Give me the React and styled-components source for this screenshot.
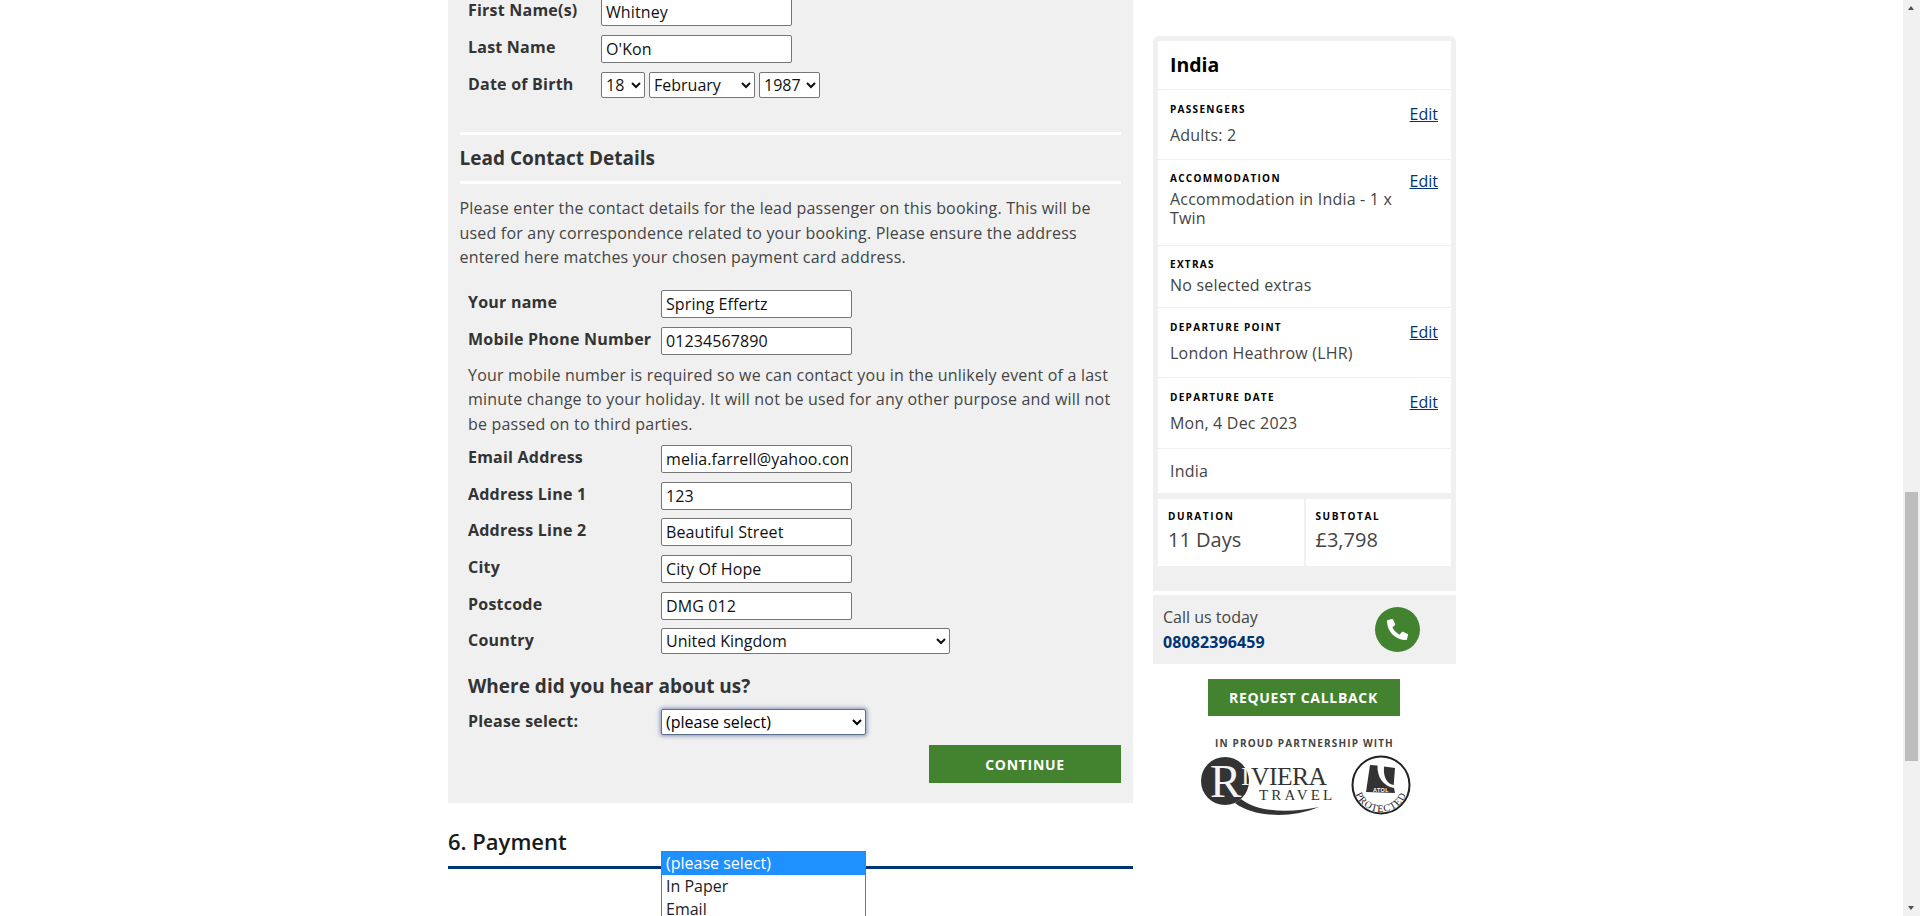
import React from "react";
import styled, { createGlobalStyle } from "styled-components";
import { FaPhoneAlt } from "react-icons/fa";

const Global = createGlobalStyle`
  html, body { margin: 0; padding: 0; height: 916px; overflow: hidden; background: #fff; }
  body { font-family: "Open Sans", "Noto Sans", sans-serif; font-size: 16px; color: #3c3c3c; }
  * { box-sizing: border-box; }
`;

const Page = styled.div`
  height: 916px;
  overflow: hidden;
  padding-right: 17px;
`;
const Columns = styled.div`
  width: 1008px;
  margin: 0 auto;
  display: flex;
  gap: 20px;
  align-items: flex-start;
  padding-left: 0.5px;
`;
const Main = styled.main`
  width: 685px;
  flex: none;
`;
const Panel = styled.section`
  background: #f0f0f0;
  padding: 0 12px 20px 11.5px;
`;
const NameRows = styled.div`
  margin-top: -2px;
  padding-left: 8.5px;
`;
const NameRow = styled.div`
  height: 37px;
  display: grid;
  grid-template-columns: 133px auto;
  justify-content: start;
`;
const ContactRow = styled.div`
  height: 36.67px;
  display: grid;
  grid-template-columns: 193px auto;
  justify-content: start;
`;
const ContactRows = styled.div`
  padding-left: 8.5px;
`;
const Label = styled.label`
  font-weight: 700;
  font-size: 16px;
  letter-spacing: 0.22px;
  line-height: 25px;
  color: #333;
`;
const TextInput = styled.input`
  width: 191px;
  height: 28px;
  padding: 1px 3px 1px 4px;
  border: 1px solid #767676;
  border-radius: 2px;
  background: #fff;
  font: 16px "Open Sans", sans-serif;
  letter-spacing: 0.1px;
  color: #111;
  outline: none;
`;
const Native = styled.select`
  height: 26px;
  border: 1px solid #767676;
  border-radius: 2px;
  background: #fff;
  font: 16px "Open Sans", sans-serif;
  color: #111;
  width: ${(p) => p.$w}px;
  padding: 0;
`;
const DateGroup = styled.div`
  display: flex;
  gap: 4px;
  align-items: flex-start;
`;
const Rule = styled.hr`
  height: 3px;
  margin: ${(p) => p.$top || 0}px 0 0;
  border: 0;
  background: #fff;
`;
const SectionTitle = styled.h3`
  margin: 0;
  height: 46px;
  display: flex;
  align-items: center;
  font-size: 19px;
  font-weight: 700;
  color: #333;
`;
const Para = styled.p`
  margin: 12px 0 20.5px;
  font-size: 16px;
  letter-spacing: 0.2px;
  line-height: 24.5px;
  color: #444;
`;
const Note = styled.p`
  margin: -0.5px 0 8.75px;
  font-size: 16px;
  letter-spacing: 0.2px;
  line-height: 24.5px;
  color: #444;
`;
const HearTitle = styled.h3`
  margin: 7px 0 9px;
  font-size: 19px;
  line-height: 28px;
  font-weight: 700;
  color: #333;
`;
const HearRow = styled.div`
  height: 36px;
  display: grid;
  grid-template-columns: 193px auto;
  justify-content: start;
`;
const SelectWrap = styled.div`
  position: relative;
  height: 26px;
`;
const FocusSelect = styled(Native)`
  display: block;
  color: #000;
  outline: none;
  border-color: #5f6f8f;
  box-shadow: 0 0 4px 1px rgba(60, 80, 150, 0.6);
`;
const DropList = styled.ul`
  position: absolute;
  top: 142px;
  left: 0;
  width: 205px;
  margin: 0;
  padding: 0;
  list-style: none;
  background: #fff;
  border: 1px solid #767676;
  z-index: 5;
`;
const DropItem = styled.li`
  height: ${(p) => (p.$active ? 23 : 22.5)}px;
  line-height: 22px;
  padding-left: 4px;
  font-size: 16px;
  color: ${(p) => (p.$active ? "#fff" : "#222")};
  background: ${(p) => (p.$active ? "#1e90ff" : "#fff")};
`;
const ButtonRow = styled.div`
  display: flex;
  justify-content: flex-end;
`;
const GreenButton = styled.button`
  border: 0;
  background: #43832f;
  color: #fff;
  font: 700 14px "Open Sans", sans-serif;
  letter-spacing: 0.7px;
  width: ${(p) => p.$w}px;
  height: ${(p) => p.$h}px;
  padding: 0;
`;
const PaymentTitle = styled.h2`
  margin: 22px 0 0;
  padding-bottom: 9px;
  border-bottom: 3px solid #003473;
  font-size: 22px;
  line-height: 32px;
  font-weight: 600;
  color: #1a1a1a;
`;

const Sidebar = styled.aside`
  width: 303px;
  flex: none;
  margin-top: 36px;
`;
const SummaryBox = styled.div`
  background: #f0f0f0;
  border-radius: 6px 6px 0 0;
  padding: 5px 5px 25px;
`;
const Card = styled.div`
  background: #fff;
`;
const CardTitle = styled.h2`
  margin: 0;
  height: 49px;
  padding: 0 12px 2px;
  display: flex;
  align-items: center;
  border-bottom: 1px solid #f0f0f0;
  font-size: 19.5px;
  font-weight: 700;
  color: #000;
`;
const Item = styled.div`
  height: ${(p) => p.$h}px;
  padding: ${(p) => p.$pt}px 13px 0 12px;
  display: flex;
  justify-content: space-between;
  align-items: flex-start;
  border-bottom: ${(p) => (p.$last ? "0" : "1px solid #f0f0f0")};
`;
const ItemBody = styled.div`
  width: 228px;
`;
const Cap = styled.div`
  font-size: 10px;
  font-weight: 700;
  letter-spacing: ${(p) => p.$sp || 1.3}px;
  line-height: 14px;
  text-transform: uppercase;
  color: #000;
`;
const Value = styled.div`
  margin-top: ${(p) => p.$gap}px;
  font-size: 16px;
  letter-spacing: 0.2px;
  line-height: 19.5px;
  color: #444;
`;
const EditLink = styled.a`
  font-size: 16px;
  line-height: 22px;
  margin-top: ${(p) => p.$mt}px;
  color: #003473;
  text-decoration: underline;
`;
const Stats = styled.div`
  display: flex;
  height: 67px;
  margin-top: 6px;
  background: #fff;
`;
const Stat = styled.div`
  flex: 1;
  padding: 10px 0 0 10px;
  border-left: ${(p) => (p.$right ? "2px solid #f0f0f0" : "0")};
`;
const StatValue = styled.div`
  font-size: 20px;
  line-height: 27px;
  margin-top: 3px;
  color: #444;
`;
const CallBox = styled.div`
  height: 69px;
  margin-top: 4px;
  padding: 10px 36px 0 10px;
  background: #f0f0f0;
  display: flex;
  justify-content: space-between;
  align-items: flex-start;
`;
const CallText = styled.div`
  font-size: 16px;
  line-height: 25px;
  color: #444;
`;
const CallNumber = styled.div`
  font-weight: 700;
  letter-spacing: 0.1px;
  color: #003473;
`;
const PhoneRound = styled.div`
  width: 45px;
  height: 45px;
  margin-top: 2px;
  border-radius: 50%;
  background: #43832f;
  color: #fff;
  display: flex;
  align-items: center;
  justify-content: center;
`;
const CallbackRow = styled.div`
  display: flex;
  justify-content: center;
  margin-top: 15px;
  padding-right: 2px;
`;
const Partner = styled.div`
  margin-top: 20px;
  text-align: center;
  font-size: 10px;
  font-weight: 700;
  letter-spacing: 1.15px;
  line-height: 14px;
  color: #444;
`;
const Logos = styled.div`
  margin-top: 5px;
  padding-left: 2px;
  display: flex;
  justify-content: center;
  align-items: center;
  gap: 19px;
`;
const Scrollbar = styled.div`
  position: fixed;
  top: 0;
  right: 0;
  width: 17px;
  height: 916px;
  background: #f1f1f1;
`;
const Thumb = styled.div`
  position: absolute;
  top: 492px;
  left: 2px;
  width: 13px;
  height: 269px;
  background: #bdbdbd;
`;
const Arrow = styled.div`
  position: absolute;
  left: 5px;
  ${(p) => (p.$up ? "top: 6px;" : "bottom: 6px;")}
  width: 0;
  height: 0;
  border-left: 3.5px solid transparent;
  border-right: 3.5px solid transparent;
  ${(p) => (p.$up ? "border-bottom: 4px solid #505050;" : "border-top: 4px solid #505050;")}
`;

const RivieraLogo = () => (
  <svg width="133" height="62" viewBox="0 0 133 62">
    <circle cx="26" cy="26" r="24" fill="#333" />
    <path d="M36 48 C54 62 92 64 120 52 C92 58 60 58 42 44 Z" fill="#333" />
    <text x="11" y="42" fontFamily="Liberation Serif, serif" fontSize="47" fill="#f4f4f4">R</text>
    <text x="42" y="30" fontFamily="Liberation Serif, serif" fontSize="26" fill="#f4f4f4">I</text>
    <text x="52" y="30" fontFamily="Liberation Serif, serif" fontSize="25.5" letterSpacing="-0.5" fill="#333">VIERA</text>
    <text x="60" y="45" fontFamily="Liberation Serif, serif" fontSize="15" letterSpacing="3.2" fill="#333">TRAVEL</text>
  </svg>
);

const AtolLogo = () => (
  <svg width="61" height="62" viewBox="0 0 61 62">
    <circle cx="30" cy="30" r="28.5" fill="#fff" stroke="#222" strokeWidth="2" />
    <path d="M19 10 L26.5 10.5 C26 22 32 31 43 33 L44 38 L15 37 Z" fill="#333" />
    <path d="M33 11.5 L44 13 L42.7 30 C37 29 32 24 33 11.5 Z" fill="#333" />
    <text x="30" y="36.5" textAnchor="middle" fontFamily="Liberation Sans, sans-serif" fontSize="5.5" fontWeight="700" letterSpacing="0.4" fill="#fff">ATOL</text>
    <defs>
      <path id="atolArc" d="M3 30 A27 27 0 0 0 57 30" fill="none" />
    </defs>
    <text fontFamily="Liberation Serif, serif" fontSize="10" letterSpacing="0.9" fill="#222">
      <textPath href="#atolArc" startOffset="50%" textAnchor="middle">PROTECTED</textPath>
    </text>
  </svg>
);

const names = [
  ["First Name(s)", "Whitney"],
  ["Last Name", "O'Kon"],
];
const contactsA = [
  ["Your name", "Spring Effertz"],
  ["Mobile Phone Number", "01234567890"],
];
const contactsB = [
  ["Email Address", "melia.farrell@yahoo.com"],
  ["Address Line 1", "123"],
  ["Address Line 2", "Beautiful Street"],
  ["City", "City Of Hope"],
  ["Postcode", "DMG 012"],
];

export default function App() {
  return (
    <Page>
      <Global />
      <Columns>
        <Main>
          <Panel>
            <NameRows>
              {names.map(([l, v]) => (
                <NameRow key={l}>
                  <Label>{l}</Label>
                  <TextInput defaultValue={v} />
                </NameRow>
              ))}
              <NameRow>
                <Label>Date of Birth</Label>
                <DateGroup>
                  <Native $w={44} defaultValue="18"><option>18</option></Native>
                  <Native $w={106} defaultValue="February"><option>February</option></Native>
                  <Native $w={61} defaultValue="1987"><option>1987</option></Native>
                </DateGroup>
              </NameRow>
            </NameRows>
            <Rule $top={23} />
            <SectionTitle>Lead Contact Details</SectionTitle>
            <Rule />
            <Para>
              Please enter the contact details for the lead passenger on this booking. This will be used for any correspondence related to your booking. Please ensure the address entered here matches your chosen payment card address.
            </Para>
            <ContactRows>
              {contactsA.map(([l, v]) => (
                <ContactRow key={l}>
                  <Label>{l}</Label>
                  <TextInput defaultValue={v} />
                </ContactRow>
              ))}
              <Note>
                Your mobile number is required so we can contact you in the unlikely event of a last minute change to your holiday. It will not be used for any other purpose and will not be passed on to third parties.
              </Note>
              {contactsB.map(([l, v]) => (
                <ContactRow key={l}>
                  <Label>{l}</Label>
                  <TextInput defaultValue={v} />
                </ContactRow>
              ))}
              <ContactRow>
                <Label>Country</Label>
                <Native $w={289} defaultValue="United Kingdom"><option>United Kingdom</option></Native>
              </ContactRow>
              <HearTitle>Where did you hear about us?</HearTitle>
              <HearRow>
                <Label>Please select:</Label>
                <SelectWrap>
                  <FocusSelect $w={205}><option>(please select)</option></FocusSelect>
                  <DropList>
                    <DropItem $active>(please select)</DropItem>
                    <DropItem>In Paper</DropItem>
                    <DropItem>Email</DropItem>
                  </DropList>
                </SelectWrap>
              </HearRow>
            </ContactRows>
            <ButtonRow>
              <GreenButton $w={192} $h={38}>CONTINUE</GreenButton>
            </ButtonRow>
          </Panel>
          <PaymentTitle>6. Payment</PaymentTitle>
        </Main>
        <Sidebar>
          <SummaryBox>
            <Card>
              <CardTitle>India</CardTitle>
              <Item $h={70} $pt={12}>
                <ItemBody>
                  <Cap>Passengers</Cap>
                  <Value $gap={10}>Adults: 2</Value>
                </ItemBody>
                <EditLink href="#" $mt={1}>Edit</EditLink>
              </Item>
              <Item $h={86} $pt={11}>
                <ItemBody>
                  <Cap>Accommodation</Cap>
                  <Value $gap={4.5}>Accommodation in India - 1 x Twin</Value>
                </ItemBody>
                <EditLink href="#" $mt={-1}>Edit</EditLink>
              </Item>
              <Item $h={62} $pt={11}>
                <ItemBody>
                  <Cap>Extras</Cap>
                  <Value $gap={5}>No selected extras</Value>
                </ItemBody>
              </Item>
              <Item $h={70} $pt={12}>
                <ItemBody>
                  <Cap>Departure Point</Cap>
                  <Value $gap={10}>London Heathrow (LHR)</Value>
                </ItemBody>
                <EditLink href="#" $mt={1}>Edit</EditLink>
              </Item>
              <Item $h={71} $pt={12}>
                <ItemBody>
                  <Cap>Departure Date</Cap>
                  <Value $gap={10}>Mon, 4 Dec 2023</Value>
                </ItemBody>
                <EditLink href="#" $mt={1}>Edit</EditLink>
              </Item>
              <Item $h={44} $pt={13} $last>
                <ItemBody>
                  <Value $gap={0}>India</Value>
                </ItemBody>
              </Item>
            </Card>
            <Stats>
              <Stat>
                <Cap $sp={1.6}>Duration</Cap>
                <StatValue>11 Days</StatValue>
              </Stat>
              <Stat $right>
                <Cap $sp={1.6}>Subtotal</Cap>
                <StatValue>£3,798</StatValue>
              </Stat>
            </Stats>
          </SummaryBox>
          <CallBox>
            <CallText>
              Call us today
              <CallNumber>08082396459</CallNumber>
            </CallText>
            <PhoneRound><FaPhoneAlt size={21} /></PhoneRound>
          </CallBox>
          <CallbackRow>
            <GreenButton $w={192} $h={37}>REQUEST CALLBACK</GreenButton>
          </CallbackRow>
          <Partner>IN PROUD PARTNERSHIP WITH</Partner>
          <Logos>
            <RivieraLogo />
            <AtolLogo />
          </Logos>
        </Sidebar>
      </Columns>
      <Scrollbar>
        <Arrow $up />
        <Thumb />
        <Arrow />
      </Scrollbar>
    </Page>
  );
}
